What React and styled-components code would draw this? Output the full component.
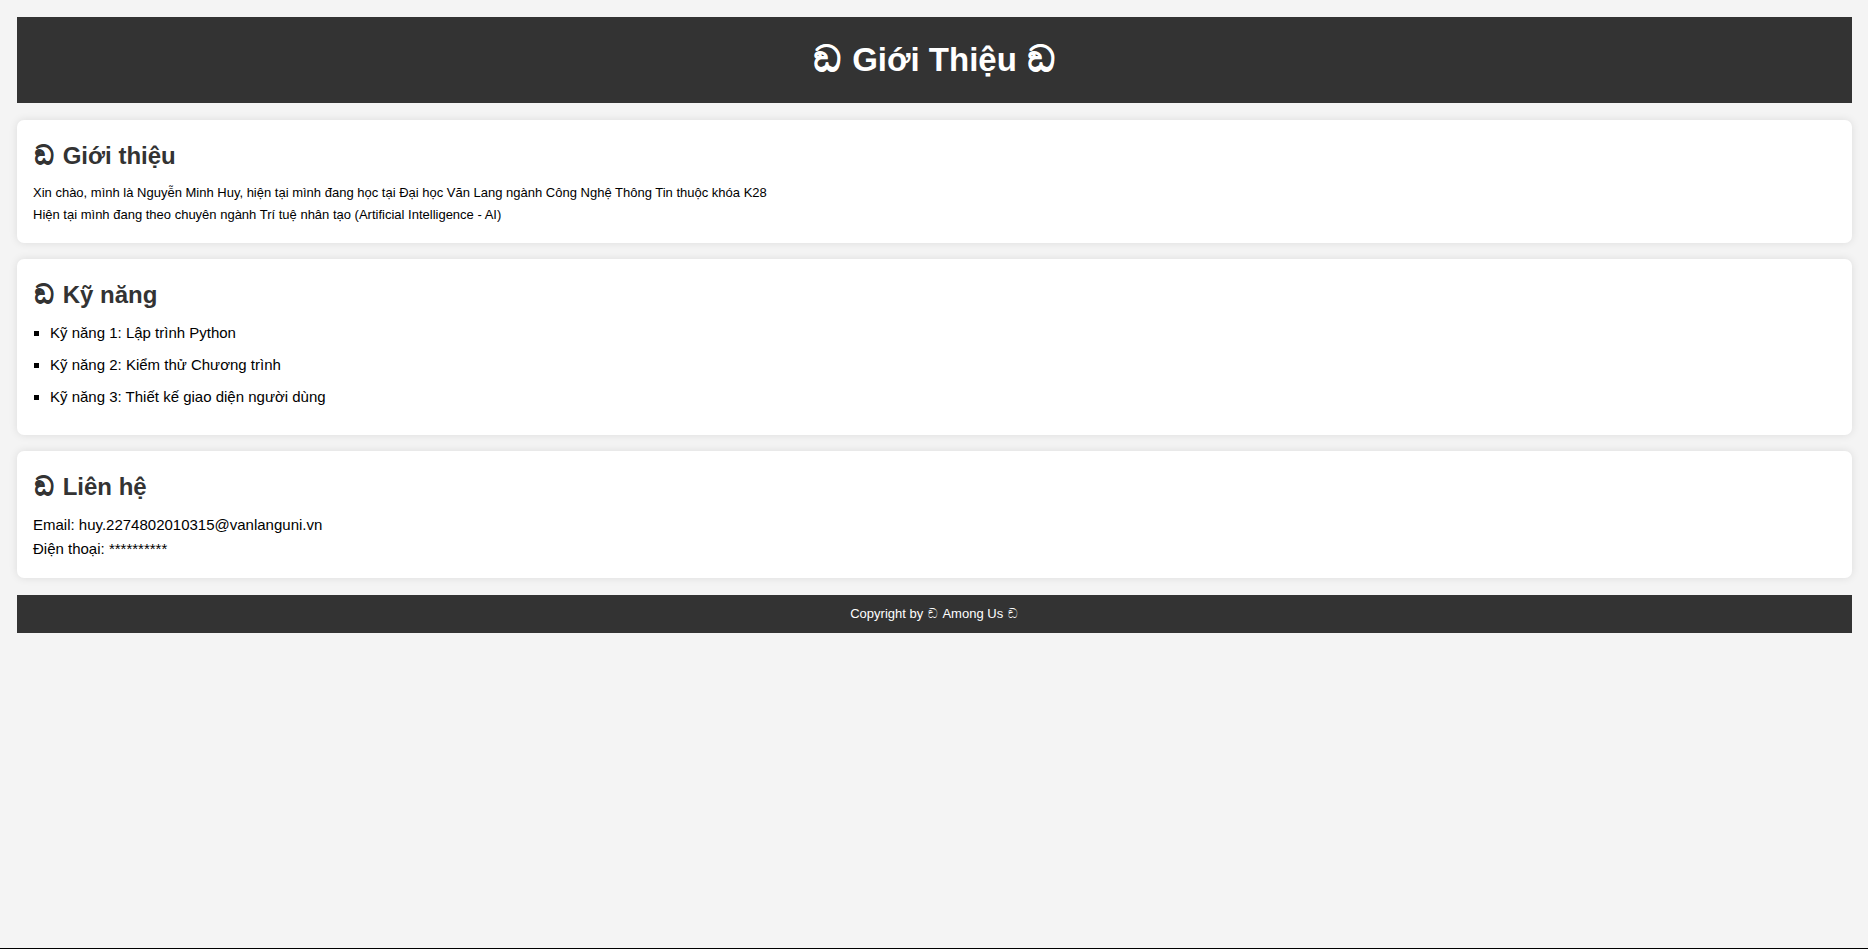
import React from 'react';
import styled, { createGlobalStyle } from 'styled-components';

const GlobalStyle = createGlobalStyle`
  * { box-sizing: border-box; }
  body {
    margin: 0;
    background: #f4f4f4;
    color: #000;
    font-family: "Liberation Sans", Arial, sans-serif;
    font-size: 15px;
    line-height: 24px;
  }
`;

const Page = styled.div`
  min-height: 100vh;
  padding: 17px 16px 16px 17px;
  border-bottom: 1px solid #000;
`;

const Header = styled.header`
  padding: 17px;
  background: #333;
  color: #fff;
  text-align: center;
`;

const Title = styled.h1`
  margin: 0;
  font-size: 33px;
  line-height: 52px;
`;

const Crewmate = styled.span`
  margin: 0 ${({ $gap }) => $gap}px;
  font-size: ${({ $size }) => $size}px;
  line-height: 1;
  -webkit-text-stroke: ${({ $stroke }) => $stroke || 0}px currentColor;
`;

const Main = styled.main`
  display: flex;
  flex-direction: column;
  gap: 16px;
  padding: 17px 0;
`;

const Card = styled.section`
  padding: 17px 16px;
  background: #fff;
  border-radius: 7px;
  box-shadow: 0 0 8px rgba(0, 0, 0, 0.1);
`;

const CardHeading = styled.h2`
  margin: 0 0 8px;
  color: #333;
  font-size: 24px;
  line-height: 37px;
`;

const Intro = styled.p`
  margin: 0;
  font-size: 13px;
  line-height: 22px;
`;

const SkillList = styled.ul`
  margin: 0 0 9px;
  padding-left: 17px;
  list-style: square;
`;

const Skill = styled.li`
  margin-bottom: 8px;

  &:last-child {
    margin-bottom: 9px;
  }
`;

const Contact = styled.address`
  font-style: normal;
`;

const Footer = styled.footer`
  padding: 8px;
  background: #333;
  color: #fff;
  font-size: 13px;
  line-height: 22px;
  text-align: center;
`;

function CardTitle({ children }) {
  return (
    <CardHeading>
      <Crewmate $size={25} $stroke={1} $gap={2}>ඞ</Crewmate> {children}
    </CardHeading>
  );
}

export default function App() {
  return (
    <>
      <GlobalStyle />
      <Page>
        <Header>
          <Title>
            <Crewmate $size={36} $stroke={1} $gap={2}>ඞ</Crewmate> Giới Thiệu <Crewmate $size={36} $stroke={1} $gap={2}>ඞ</Crewmate>
          </Title>
        </Header>
        <Main>
          <Card>
            <CardTitle>Giới thiệu</CardTitle>
            <Intro>
              Xin chào, mình là Nguyễn Minh Huy, hiện tại mình đang học tại Đại học Văn Lang ngành Công Nghệ Thông Tin thuộc khóa K28
              <br />
              Hiện tại mình đang theo chuyên ngành Trí tuệ nhân tạo (Artificial Intelligence - AI)
            </Intro>
          </Card>
          <Card>
            <CardTitle>Kỹ năng</CardTitle>
            <SkillList>
              <Skill>Kỹ năng 1: Lập trình Python</Skill>
              <Skill>Kỹ năng 2: Kiểm thử Chương trình</Skill>
              <Skill>Kỹ năng 3: Thiết kế giao diện người dùng</Skill>
            </SkillList>
          </Card>
          <Card>
            <CardTitle>Liên hệ</CardTitle>
            <Contact>
              Email: huy.2274802010315@vanlanguni.vn
              <br />
              Điện thoại: **********
            </Contact>
          </Card>
        </Main>
        <Footer>
          Copyright by <Crewmate $size={13} $gap={1}>ඞ</Crewmate> Among Us <Crewmate $size={13} $gap={1}>ඞ</Crewmate>
        </Footer>
      </Page>
    </>
  );
}
